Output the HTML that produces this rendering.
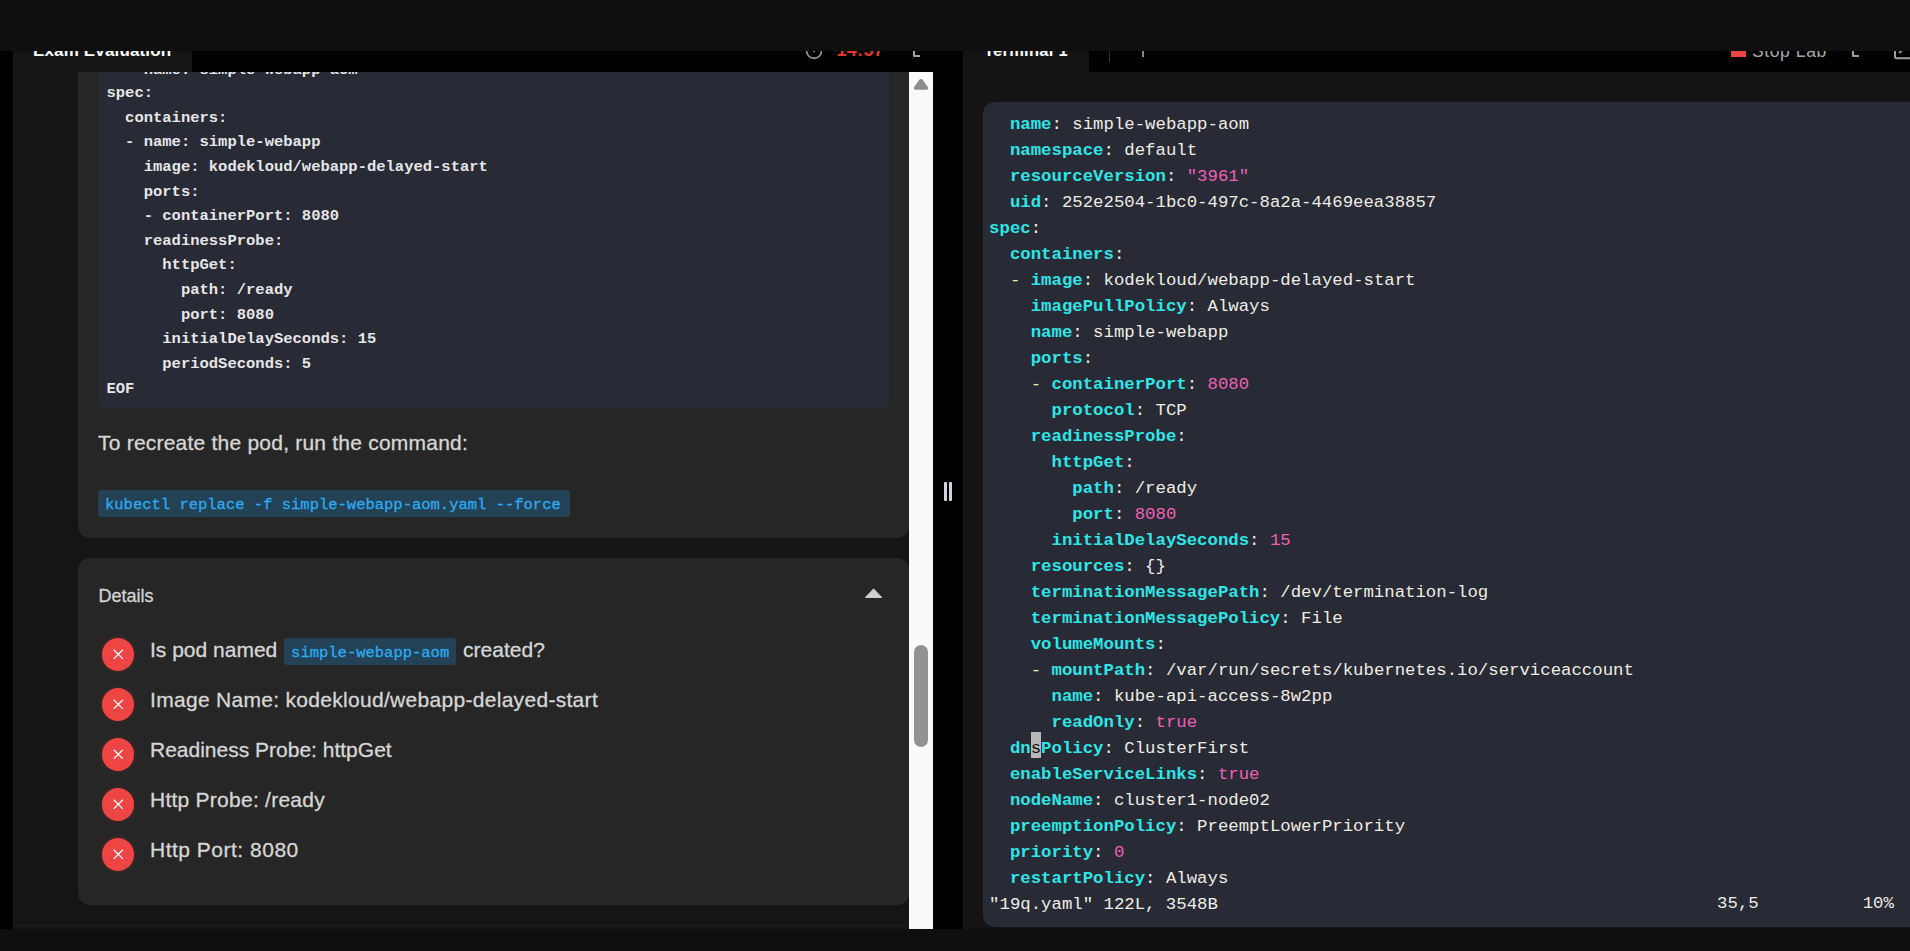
<!DOCTYPE html>
<html><head><meta charset="utf-8">
<style>
*{margin:0;padding:0;box-sizing:border-box}
html,body{width:1910px;height:951px;overflow:hidden;background:#000;font-family:"Liberation Sans",sans-serif}
.a{position:absolute}
#topbar{left:0;top:0;width:1910px;height:51px;background:#0f0f0f;z-index:10}
#botbar{left:0;top:929px;width:1910px;height:22px;background:#0f0f0f;z-index:10}
#lstrip{left:0;top:51px;width:13px;height:878px;background:#000}
#lpanel{left:13px;top:72px;width:896px;height:857px;background:#151515;overflow:hidden}
#lhead{left:13px;top:51px;width:920px;height:21px;background:#000;overflow:hidden}
#ltab{left:0;top:0;width:179px;height:21px;background:#151515}
.tabtxt{position:absolute;font-weight:bold;color:#fff;font-size:17px;line-height:20px;white-space:nowrap}
#gutter{left:933px;top:51px;width:30px;height:878px;background:#000}
#scroll{left:909px;top:72px;width:24px;height:857px;background:#fafafa}
#tpanel{left:963px;top:51px;width:947px;height:878px;background:#141414;overflow:hidden}
#thead{left:0;top:0;width:947px;height:21px;background:#000;overflow:hidden}
#ttab{left:0;top:0;width:126px;height:21px;background:#141414}
#tbox{left:983px;top:102px;width:940px;height:825px;background:#282a36;border-radius:12px;overflow:hidden}
.card{position:absolute;background:#262626;border-radius:12px}
.code{position:absolute;background:#282a36;border-radius:0 0 6px 6px}
.codetxt{position:absolute;font-family:"Liberation Mono",monospace;font-weight:bold;color:#e6e6e6;font-size:15.5px;line-height:24.62px;white-space:pre}
.sans{position:absolute;color:#d6d6d6;font-size:21px;line-height:24px;white-space:nowrap;-webkit-text-stroke:0.3px #d6d6d6}
.chip{position:absolute;background:#234256;color:#2eaaf0;font-family:"Liberation Mono",monospace;font-size:15.5px;border-radius:3px;white-space:pre;height:27px;line-height:30.5px;padding-left:7px;-webkit-text-stroke:0.3px #2eaaf0}
.icon{position:absolute;width:32.6px;height:32.6px;border-radius:50%;background:#ef4444;box-shadow:0 0 3px 3px rgba(239,68,68,0.06)}
.term{position:absolute;left:6.1px;top:10px;font-family:"Liberation Mono",monospace;font-size:17.333px;line-height:26px;white-space:pre;color:#efede3}
.k{color:#2ee6e6;font-weight:bold}
.n{color:#ee60b4}
.d{color:#f0eea0}
</style></head><body>
<div id="topbar" class="a"></div>
<div id="lstrip" class="a"></div>
<div id="lhead" class="a">
  <div id="ltab" class="a"><div class="tabtxt" style="left:20px;top:-10px;letter-spacing:0.15px">Exam Evaluation</div></div>
  <svg class="a" style="left:785px;top:-10px" width="24" height="24" viewBox="0 0 24 24"><circle cx="16.05" cy="9.75" r="7.5" fill="none" stroke="#8c8c92" stroke-width="1.8"/><path d="M16.05 5 V10.6" stroke="#8c8c92" stroke-width="1.8" stroke-linecap="round"/></svg>
  <div class="tabtxt" style="left:823.5px;top:-11px;color:#e53530;font-size:18px;letter-spacing:0.3px">14:57</div>
  <svg class="a" style="left:895.5px;top:-10px" width="14" height="20" viewBox="0 0 14 20"><path d="M5 4 V15 H11" fill="none" stroke="#a0a0a6" stroke-width="2" stroke-linejoin="round"/></svg>
</div>
<div id="lpanel" class="a">
  <div class="card" style="left:65px;top:-40px;width:831px;height:506px;border-radius:0 0 12px 12px"></div>
  <div class="code" style="left:85px;top:-40px;width:791px;height:376px"></div>
  <div class="codetxt" style="left:93.5px;top:-13.6px">    name: simple-webapp-aom</div><div class="codetxt" style="left:93.5px;top:9.1px">spec:
  containers:
  - name: simple-webapp
    image: kodekloud/webapp-delayed-start
    ports:
    - containerPort: 8080
    readinessProbe:
      httpGet:
        path: /ready
        port: 8080
      initialDelaySeconds: 15
      periodSeconds: 5
EOF</div>
  <div class="sans" style="left:85px;top:359px;letter-spacing:0.22px">To recreate the pod, run the command:</div>
  <div class="chip" style="left:85px;top:418px;width:472px">kubectl replace -f simple-webapp-aom.yaml --force</div>
  <div class="card" style="left:65px;top:485.6px;width:831px;height:347.4px"></div>
  <div class="sans" style="left:85.5px;top:513.3px;font-size:18px;line-height:22px;color:#d2d2d2">Details</div>
  <svg class="a" style="left:852px;top:515px" width="18" height="12" viewBox="0 0 18 12"><path d="M8.6 2.2 L16.4 10.4 H0.8 Z" fill="#d0d0d0" stroke="#d0d0d0" stroke-width="1.2" stroke-linejoin="round"/></svg>
  <div class="icon" style="left:88.9px;top:566.3px"><svg class="a" style="left:0;top:0" width="32.6" height="32.6" viewBox="0 0 32 32"><path d="M11.5 11.5 L20.5 20.5 M20.5 11.5 L11.5 20.5" stroke="#fff" stroke-width="1.3" fill="none"/></svg></div>
<div class="sans" style="left:137px;top:565.5px;letter-spacing:0px">Is pod named <span class="chip" style="position:relative;display:inline-block;vertical-align:top;margin-top:0px;top:0;width:172px;font-size:15.5px;margin-right:7px;margin-left:1px;line-height:30px;letter-spacing:0;-webkit-text-stroke:0.3px #2eaaf0">simple-webapp-aom</span>created?</div>
<div class="icon" style="left:88.9px;top:616.3px"><svg class="a" style="left:0;top:0" width="32.6" height="32.6" viewBox="0 0 32 32"><path d="M11.5 11.5 L20.5 20.5 M20.5 11.5 L11.5 20.5" stroke="#fff" stroke-width="1.3" fill="none"/></svg></div>
<div class="sans" style="left:137px;top:615.5px;letter-spacing:0.3px">Image Name: kodekloud/webapp-delayed-start</div>
<div class="icon" style="left:88.9px;top:666.3px"><svg class="a" style="left:0;top:0" width="32.6" height="32.6" viewBox="0 0 32 32"><path d="M11.5 11.5 L20.5 20.5 M20.5 11.5 L11.5 20.5" stroke="#fff" stroke-width="1.3" fill="none"/></svg></div>
<div class="sans" style="left:137px;top:665.5px;letter-spacing:0px">Readiness Probe: httpGet</div>
<div class="icon" style="left:88.9px;top:716.3px"><svg class="a" style="left:0;top:0" width="32.6" height="32.6" viewBox="0 0 32 32"><path d="M11.5 11.5 L20.5 20.5 M20.5 11.5 L11.5 20.5" stroke="#fff" stroke-width="1.3" fill="none"/></svg></div>
<div class="sans" style="left:137px;top:715.5px;letter-spacing:0.25px">Http Probe: /ready</div>
<div class="icon" style="left:88.9px;top:766.3px"><svg class="a" style="left:0;top:0" width="32.6" height="32.6" viewBox="0 0 32 32"><path d="M11.5 11.5 L20.5 20.5 M20.5 11.5 L11.5 20.5" stroke="#fff" stroke-width="1.3" fill="none"/></svg></div>
<div class="sans" style="left:137px;top:765.5px;letter-spacing:0.5px">Http Port: 8080</div>

  <div class="a" style="left:0;top:853px;width:896px;height:1px;background:#1f1f1f"></div>
</div>
<div id="scroll" class="a">
  <svg class="a" style="left:3px;top:5px" width="18" height="14" viewBox="0 0 18 14"><path d="M9 3.6 L14.4 11 H3.6 Z" fill="#8e8e8e" stroke="#8e8e8e" stroke-width="3.6" stroke-linejoin="round"/></svg>
  <div class="a" style="left:5px;top:573px;width:14px;height:102px;border-radius:7px;background:#929292"></div>
</div>
<div id="gutter" class="a">
  <div class="a" style="left:11px;top:430.5px;width:2.6px;height:19.5px;background:#d0d4dc;border-radius:1px"></div>
  <div class="a" style="left:16px;top:430.5px;width:2.6px;height:19.5px;background:#d0d4dc;border-radius:1px"></div>
</div>
<div id="tpanel" class="a">
  <div id="thead" class="a">
    <div id="ttab" class="a"><div class="tabtxt" style="left:21px;top:-11.5px;font-size:16.5px;letter-spacing:0.25px">Terminal 1</div></div>
    <div class="a" style="left:146px;top:0;width:1px;height:11px;background:#333"></div>
    <div class="a" style="left:179px;top:-4px;width:2px;height:10px;background:#888"></div>
    <div class="a" style="left:768px;top:-6px;width:14.5px;height:12px;background:#ef4444"></div>
    <div class="tabtxt" style="left:789px;top:-10.5px;font-weight:normal;color:#a8a8a8;font-size:17.5px;letter-spacing:0.6px">Stop Lab</div>
    <svg class="a" style="left:885.7px;top:-10px" width="14" height="20" viewBox="0 0 14 20"><path d="M4 4 V15 H10" fill="none" stroke="#9c9ca2" stroke-width="2" stroke-linejoin="round"/></svg>
    <svg class="a" style="left:928.3px;top:-10px" width="24" height="20" viewBox="0 0 24 20"><path d="M4 4 V15.5 Q4 17.2 5.7 17.2 H20 M8.3 12 L16 4" fill="none" stroke="#9c9ca2" stroke-width="2" stroke-linejoin="round"/></svg>
  </div>
</div>
<div id="tbox" class="a">
  <div class="term">  <span class="k">name</span>: simple-webapp-aom
  <span class="k">namespace</span>: default
  <span class="k">resourceVersion</span>: <span class="n">"3961"</span>
  <span class="k">uid</span>: 252e2504-1bc0-497c-8a2a-4469eea38857
<span class="k">spec</span>:
  <span class="k">containers</span>:
  <span class="d">-</span> <span class="k">image</span>: kodekloud/webapp-delayed-start
    <span class="k">imagePullPolicy</span>: Always
    <span class="k">name</span>: simple-webapp
    <span class="k">ports</span>:
    <span class="d">-</span> <span class="k">containerPort</span>: <span class="n">8080</span>
      <span class="k">protocol</span>: TCP
    <span class="k">readinessProbe</span>:
      <span class="k">httpGet</span>:
        <span class="k">path</span>: /ready
        <span class="k">port</span>: <span class="n">8080</span>
      <span class="k">initialDelaySeconds</span>: <span class="n">15</span>
    <span class="k">resources</span>: {}
    <span class="k">terminationMessagePath</span>: /dev/termination-log
    <span class="k">terminationMessagePolicy</span>: File
    <span class="k">volumeMounts</span>:
    <span class="d">-</span> <span class="k">mountPath</span>: /var/run/secrets/kubernetes.io/serviceaccount
      <span class="k">name</span>: kube-api-access-8w2pp
      <span class="k">readOnly</span>: <span class="n">true</span>
  <span class="k">dnsPolicy</span>: ClusterFirst
  <span class="k">enableServiceLinks</span>: <span class="n">true</span>
  <span class="k">nodeName</span>: cluster1-node02
  <span class="k">preemptionPolicy</span>: PreemptLowerPriority
  <span class="k">priority</span>: <span class="n">0</span>
  <span class="k">restartPolicy</span>: Always
<span style="color:#f0efe6">"19q.yaml" 122L, 3548B</span></div>
  <div class="a" style="left:47.7px;top:630.2px;width:10.4px;height:26px;background:#b8b8b8"></div>
  <div class="term" style="top:634px;left:47.7px;color:#111">s</div>
  <div class="term" style="top:789px;left:734.1px">35,5</div>
  <div class="term" style="top:789px;left:879.7px">10%</div>
</div>
<div id="botbar" class="a"></div>
</body></html>
